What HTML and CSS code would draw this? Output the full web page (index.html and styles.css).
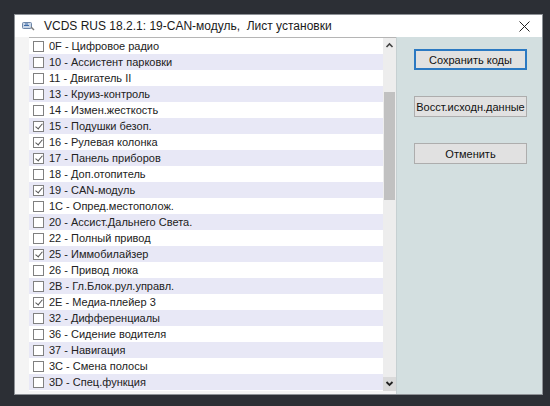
FILE: index.html
```html
<!DOCTYPE html>
<html lang="ru">
<head>
    <meta charset="UTF-8">
    <title>VCDS RUS 18.2.1: 19-CAN-модуль, Лист установки</title>
    <link rel="stylesheet" href="styles.css">
</head>
<body>
    <div class="window">
        <div class="titlebar">
            <svg class="app-icon" width="13" height="10" viewBox="0 0 13 10">
                <rect x="0.5" y="1.5" width="9" height="6" rx="1" fill="#c9d6e6" stroke="#6d86a8"/>
                <path d="M2 4.5h5M3 3h3" stroke="#3d6aa8" stroke-width="1"/>
                <path d="M9 6l3 3" stroke="#7a7a7a" stroke-width="1.4"/>
            </svg>
            <span class="title">VCDS RUS 18.2.1: 19-CAN-модуль,&nbsp; Лист установки</span>
            <svg class="close" width="11" height="11" viewBox="0 0 11 11">
                <path d="M0.5 0.5l10 10M10.5 0.5l-10 10" stroke="#222" stroke-width="1"/>
            </svg>
        </div>

        <div class="client">
            <div class="list-wrap">
                <div class="listbox">
                    <ul class="rows">
                        <li><span class="cb"></span>0F - Цифровое радио</li>
                        <li><span class="cb"></span>10 - Ассистент парковки</li>
                        <li><span class="cb"></span>11 - Двигатель II</li>
                        <li><span class="cb"></span>13 - Круиз-контроль</li>
                        <li><span class="cb"></span>14 - Измен.жесткость</li>
                        <li><span class="cb checked"></span>15 - Подушки безоп.</li>
                        <li><span class="cb checked"></span>16 - Рулевая колонка</li>
                        <li><span class="cb checked"></span>17 - Панель приборов</li>
                        <li><span class="cb"></span>18 - Доп.отопитель</li>
                        <li><span class="cb checked"></span>19 - CAN-модуль</li>
                        <li><span class="cb"></span>1C - Опред.местополож.</li>
                        <li><span class="cb"></span>20 - Ассист.Дальнего Света.</li>
                        <li><span class="cb"></span>22 - Полный привод</li>
                        <li><span class="cb checked"></span>25 - Иммобилайзер</li>
                        <li><span class="cb"></span>26 - Привод люка</li>
                        <li><span class="cb"></span>2B - Гл.Блок.рул.управл.</li>
                        <li><span class="cb checked"></span>2E - Медиа-плейер 3</li>
                        <li><span class="cb"></span>32 - Дифференциалы</li>
                        <li><span class="cb"></span>36 - Сидение водителя</li>
                        <li><span class="cb"></span>37 - Навигация</li>
                        <li><span class="cb"></span>3C - Смена полосы</li>
                        <li><span class="cb"></span>3D - Спец.функция</li>
                        <li><span class="cb"></span></li>
                    </ul>
                    <div class="scrollbar">
                        <svg class="arrow" width="13" height="14" viewBox="0 0 13 14">
                            <path d="M3.5 9l3-3 3 3" fill="none" stroke="#444" stroke-width="1.6"/>
                        </svg>
                        <div class="track">
                            <div class="thumb"></div>
                        </div>
                        <svg class="arrow down" width="13" height="14" viewBox="0 0 13 14">
                            <path d="M3.5 5l3 3 3-3" fill="none" stroke="#222" stroke-width="1.8"/>
                        </svg>
                    </div>
                </div>
            </div>

            <div class="side">
                <button class="btn default">Сохранить коды</button>
                <button class="btn">Восст.исходн.данные</button>
                <button class="btn">Отменить</button>
            </div>
        </div>
    </div>
</body>
</html>
```

FILE: styles.css
```css
body {
    margin: 0;
    padding: 14px 7px 11px 14px;
    background: #2c2f35;
    font-family: 'Liberation Sans', Arial, sans-serif;
}
.window {
    width: 527px;
    height: 379px;
    border: 1px solid #8d9196;
    background: #f3f3f3;
    display: flex;
    flex-direction: column;
}
.titlebar {
    height: 22px;
    background: #ffffff;
    display: flex;
    align-items: center;
    padding-left: 7px;
    flex-shrink: 0;
}
.app-icon {
    margin-right: 9px;
}
.title {
    font-size: 12px;
    color: #1a1a1a;
    flex: 1;
}
.close {
    margin-right: 12px;
}
.client {
    flex: 1;
    display: flex;
    min-height: 0;
}
.list-wrap {
    width: 367px;
    padding: 0 0 3px 14px;
    background: #f4f4f4;
    display: flex;
}
.listbox {
    flex: 1;
    display: flex;
    border-top: 1px solid #b5b5b5;
    background: #fff;
    overflow: hidden;
}
.rows {
    list-style: none;
    margin: 0;
    padding: 0;
    flex: 1;
    overflow: hidden;
}
.rows li {
    height: 16px;
    display: flex;
    align-items: center;
    padding-left: 4px;
    font-size: 11px;
    color: #222;
    white-space: nowrap;
}
.rows li:nth-child(even) {
    background: #e8e8f6;
}
.cb {
    width: 9px;
    height: 9px;
    border: 1px solid #808080;
    background: #fff;
    margin-right: 5px;
    position: relative;
    flex-shrink: 0;
}
.cb.checked::after {
    content: "";
    position: absolute;
    left: 3px;
    top: 0px;
    width: 3px;
    height: 6px;
    border: solid #555;
    border-width: 0 1px 1px 0;
    transform: rotate(40deg);
}
.scrollbar {
    width: 13px;
    background: #ededed;
    display: flex;
    flex-direction: column;
}
.arrow {
    display: block;
    flex-shrink: 0;
}
.arrow.down {
    background: #dadada;
}
.track {
    flex: 1;
    padding-top: 40px;
}
.thumb {
    height: 108px;
    margin: 0 1px;
    background: #c1c1c1;
}
.side {
    flex: 1;
    background: #d3dfe0;
    border-left: 1px solid #c6d0d2;
    display: flex;
    flex-direction: column;
    padding: 12px 0 0 17px;
}
.btn {
    width: 113px;
    height: 21px;
    margin-bottom: 26px;
    padding: 0;
    border: 1px solid #adadad;
    background: #e1e1e1;
    font-family: 'Liberation Sans', Arial, sans-serif;
    font-size: 11px;
    color: #111;
}
.btn.default {
    border: 2px solid #2b79c2;
}
```
